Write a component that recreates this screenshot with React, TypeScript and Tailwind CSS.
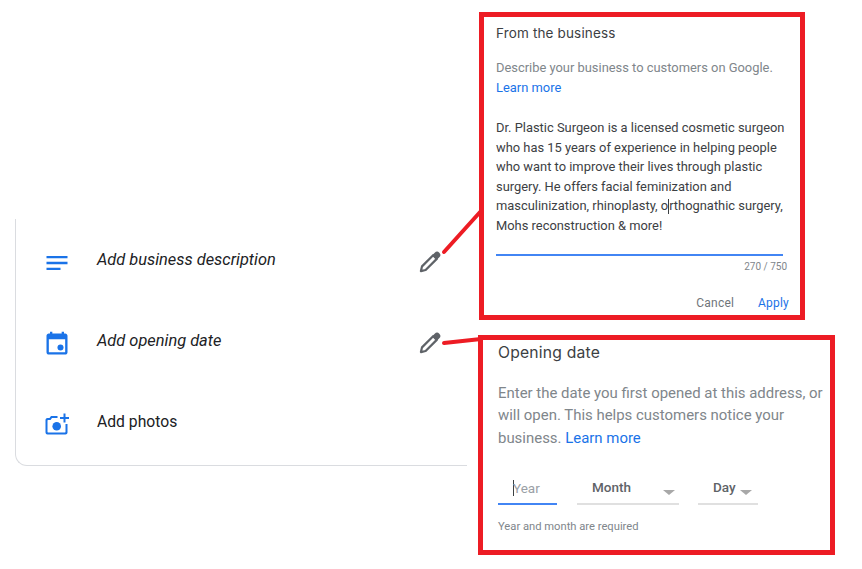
import React from 'react';

const roboto = 'font-[Roboto,sans-serif]';

function NotesIcon() {
  return (
    <svg viewBox="0 0 24 24" className="w-7 h-7 fill-[#1a73e8]">
      <path d="M3 18h12v-2H3v2zM3 6v2h18V6H3zm0 7h18v-2H3v2z" />
    </svg>
  );
}

function CalendarIcon() {
  return (
    <svg viewBox="0 0 24 24" className="w-7 h-7 fill-[#1a73e8]">
      <path d="M16 1.500V3H8V1.500H6V3H5c-1.100 0-2 .9-2 2v14c0 1.100.9 2 2 2h14c1.100 0 2-.9 2-2V5c0-1.100-.9-2-2-2h-1V1.500h-2zm3 17.500H5V8h14v11z" />
      <circle cx="15" cy="15" r="2.600" />
    </svg>
  );
}

function PhotoIcon() {
  return (
    <svg viewBox="0 0 28 28" className="w-7 h-7 fill-[#1a73e8]">
      <g transform="translate(0 -0.900)">
        <path d="M8 6h6.500v2H9L7.500 10H5c-.3 0-.5.2-.5.5V22c0 .3.2.5.5.5h17c.3 0 .5-.2.5-.5v-8h2v8.500c0 1.100-.9 2-2 2H4.500a2 2 0 0 1-2-2V10c0-1.100.9-2 2-2h2z" />
        <circle cx="13.700" cy="16.200" r="4.300" />
        <path d="M20.500 3.500h2V7H26v2h-3.500v3.500h-2V9H17V7h3.500z" />
      </g>
    </svg>
  );
}

function PencilIcon() {
  return (
    <svg viewBox="0 0 24 24" className="w-[28px] h-[28px]">
      <g transform="rotate(45 12 12)">
        <path d="M9.200 3.500 a2.800 2.800 0 0 1 5.600 0V6.500H9.200z" fill="#5f6368" />
        <path d="M9.800 6v13.500l2.200 3.500 2.200-3.500V6z" fill="none" stroke="#5f6368" strokeWidth="1.900" strokeLinejoin="round" />
      </g>
    </svg>
  );
}

function Row({ icon, label, italic, edit }: { icon: React.ReactNode; label: string; italic?: boolean; edit?: boolean }) {
  return (
    <div className="h-[81px] flex items-center">
      <div className="w-[81px] pl-[27px] shrink-0 flex mt-[6px]">{icon}</div>
      <span className={`flex-1 text-[#202124] ${italic ? 'italic text-[16.400px] mt-[2px]' : 'text-[15.700px]'}`}>{label}</span>
      {edit && (
        <div className="mr-[23px] mt-1">
          <PencilIcon />
        </div>
      )}
    </div>
  );
}

function SelectField({ label, width, gap }: { label: string; width: string; gap: string }) {
  return (
    <div className={`${width} h-[41px] border-b-2 border-[#e0e0e0] flex items-end pb-[6px] ${gap} justify-between`}>
      <span className="text-[13.500px] leading-[20px] font-medium text-[#5f6368]">{label}</span>
      <span className="mb-[2px] w-0 h-0 border-x-[6px] border-x-transparent border-t-[5px] border-t-[#a8a8a8]" />
    </div>
  );
}

export default function App() {
  return (
    <div className={`relative w-[862px] h-[569px] overflow-hidden bg-white ${roboto}`}>
      {/* listing card */}
      <div className="absolute left-[15px] top-[219px] w-[452px] h-[247px] border-l border-b border-[#dadce0] rounded-bl-xl">
        <Row icon={<NotesIcon />} label="Add business description" italic edit />
        <Row icon={<CalendarIcon />} label="Add opening date" italic edit />
        <Row icon={<PhotoIcon />} label="Add photos" />
      </div>

      {/* connectors */}
      <svg className="absolute left-0 top-0 w-[862px] h-[569px]" viewBox="0 0 862 569" fill="none">
        <path d="M444 252 L481 211" stroke="#ed1c24" strokeWidth="4" strokeLinecap="round" />
        <path d="M444 343 L481 339" stroke="#ed1c24" strokeWidth="4" strokeLinecap="round" />
      </svg>

      {/* description callout */}
      <div className="absolute left-[479px] top-[12px] w-[326px] h-[308px] border-[5px] border-[#ed1c24] bg-white pl-[12px] pr-[14px] pt-[6px]">
        <h2 className="text-[13.500px] leading-[20px] tracking-[0.150px] text-[#3c4043] font-[Inter,sans-serif] font-normal">From the business</h2>
        <p className="mt-[15px] text-[12.900px] leading-[19.500px] text-[#80868b]">
          Describe your business to customers on Google.
          <br />
          <a className="text-[#1a73e8]">Learn more</a>
        </p>
        <p className="mt-[21px] text-[12.900px] leading-[19.500px] text-[#3c4043] whitespace-nowrap">
          Dr. Plastic Surgeon is a licensed cosmetic surgeon
          <br />
          who has 15 years of experience in helping people
          <br />
          who want to improve their lives through plastic
          <br />
          surgery. He offers facial feminization and
          <br />
          masculinization, rhinoplasty, o
          <span className="inline-block w-px h-[15px] bg-[#3c4043] align-middle" />
          rthognathic surgery,
          <br />
          Mohs reconstruction &amp; more!
        </p>
        <div className="mt-[19px] h-[2px] w-[287px] bg-[#4285f4]" />
        <div className="mt-[4px] text-right text-[10px] leading-[14px] text-[#80868b] w-[291px]">270 / 750</div>
        <div className="mt-[21px] flex justify-end gap-[24px] text-[12px] tracking-[0.200px] leading-[16px] w-[293px]">
          <span className="text-[#70757a]">Cancel</span>
          <span className="text-[#1a73e8]">Apply</span>
        </div>
      </div>

      {/* opening date callout */}
      <div className="absolute left-[478px] top-[335px] w-[357px] h-[220px] border-[5px] border-[#ed1c24] bg-white pl-[15px] pt-[2px]">
        <h2 className="text-[15.700px] leading-[22px] tracking-[0.200px] text-[#3c4043] font-[Inter,sans-serif] font-normal">Opening date</h2>
        <p className="mt-[17.500px] text-[14.950px] leading-[22.500px] text-[#80868b] whitespace-nowrap">
          Enter the date you first opened at this address, or
          <br />
          will open. This helps customers notice your
          <br />
          business. <a className="text-[#1a73e8]">Learn more</a>
        </p>
        <div className="mt-[15px] flex">
          <div className="w-[59px] h-[41px] border-b-2 border-[#4285f4] flex items-end pb-[5px] pl-[15px]">
            <span className="w-px h-[16px] mb-[2px] bg-[#3c4043]" />
            <span className="text-[13.500px] leading-[20px] text-[#9aa0a6] -ml-px">Year</span>
          </div>
          <div className="ml-[20px]">
            <SelectField label="Month" width="w-[102px]" gap="pl-[15px] pr-[4px]" />
          </div>
          <div className="ml-[19px]">
            <SelectField label="Day" width="w-[60px]" gap="pl-[15px] pr-[6px]" />
          </div>
        </div>
        <p className="mt-[14px] text-[11.200px] leading-[16px] text-[#80868b]">Year and month are required</p>
      </div>
    </div>
  );
}
